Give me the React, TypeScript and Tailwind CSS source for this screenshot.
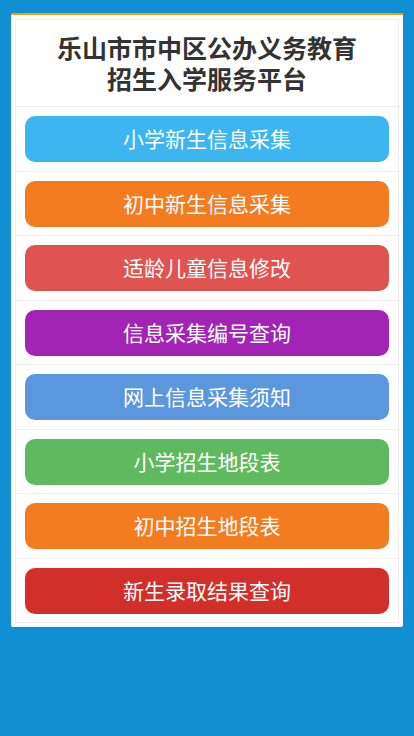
const items = [
  { label: '小学新生信息采集', bg: 'bg-[#3cb5f1]' },
  { label: '初中新生信息采集', bg: 'bg-[#f47c20]' },
  { label: '适龄儿童信息修改', bg: 'bg-[#df5450]' },
  { label: '信息采集编号查询', bg: 'bg-[#a224b4]' },
  { label: '网上信息采集须知', bg: 'bg-[#5b97dc]' },
  { label: '小学招生地段表', bg: 'bg-[#5fba5f]' },
  { label: '初中招生地段表', bg: 'bg-[#f47c20]' },
  { label: '新生录取结果查询', bg: 'bg-[#d22e2a]' },
];

export default function App() {
  return (
    <div
      className="min-h-[736px] bg-[#1090d2] px-[11px] pt-[13px]"
      style={{ fontFamily: '"Noto Sans CJK SC", "Liberation Sans", sans-serif' }}
    >
      <div className="bg-white border-t-2 border-[#f5a000] rounded-b-[2px] px-1 pt-1 pb-1">
        <div className="border border-[#eeeeee]">
          {/* 标题 */}
          <div className="h-[87px] flex flex-col items-center justify-center border-b border-[#eeeeee] text-[25px] leading-[31px] font-bold text-[#333333] text-center">
            <h1>乐山市市中区公办义务教育</h1>
            <h2>招生入学服务平台</h2>
          </div>

          {items.map((it, i) => (
            <div
              key={it.label}
              className={`px-[9px] pt-[9px] pb-[8.5px] ${i < items.length - 1 ? 'border-b border-[#f0f0f0]' : ''}`}
            >
              <a
                href="#"
                className={`${it.bg} h-[46px] rounded-[10px] flex items-center justify-center text-white text-[21px]`}
              >
                {it.label}
              </a>
            </div>
          ))}
        </div>
      </div>
    </div>
  );
}
